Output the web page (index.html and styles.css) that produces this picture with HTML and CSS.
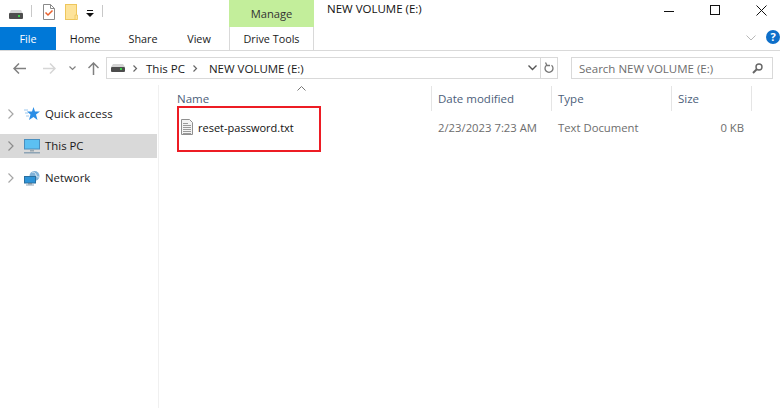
FILE: index.html
```html
<!DOCTYPE html>
<html lang="en">
<head>
<meta charset="utf-8">
<title>NEW VOLUME (E:)</title>
<link rel="stylesheet" href="styles.css">
</head>
<body>
<div class="window">
  <header class="titlebar">
    <svg class="qat-drive" width="14" height="9" viewBox="0 0 14 9"><path d="M2 0h10l2 4H0z" fill="#d4d4d4"/><rect x="0" y="3" width="14" height="6" rx="1" fill="#4d4d4d"/><rect x="9" y="5" width="2" height="2" fill="#3fd04a"/></svg>
    <span class="qat-sep sep-a"></span>
    <svg class="qat-props" width="12" height="16" viewBox="0 0 12 16"><path d="M.5.500h7l4 4v11H.5z" fill="#fff" stroke="#8a8a8a"/><path d="M7.500.5v4h4" fill="none" stroke="#8a8a8a"/><path d="M2.500 8.500l2.500 2.500 4.500-4.500" fill="none" stroke="#e8602c" stroke-width="1.500"/></svg>
    <svg class="qat-folder" width="13" height="16" viewBox="0 0 13 16"><rect x=".5" y=".5" width="11" height="15" fill="#fde39a" stroke="#eec65c"/><path d="M10 11v4.500h2.500V11z" fill="#fde39a" stroke="#eec65c" stroke-width=".8"/></svg>
    <svg class="qat-more" width="8" height="7" viewBox="0 0 8 7"><rect x="1" y="0" width="6" height="1" fill="#111"/><path d="M0 3h8L4 7z" fill="#111"/></svg>
    <span class="qat-sep sep-b"></span>
    <div class="manage">Manage</div>
    <div class="title">NEW VOLUME (E:)</div>
    <div class="controls">
      <svg width="11" height="11" viewBox="0 0 11 11"><path d="M0 6.500h10" stroke="#111"/></svg>
      <svg width="11" height="11" viewBox="0 0 11 11"><rect x=".5" y=".5" width="9" height="9" fill="none" stroke="#111"/></svg>
      <svg width="11" height="11" viewBox="0 0 11 11"><path d="M.5.500l10 10M10.500.500l-10 10" stroke="#111" fill="none"/></svg>
    </div>
  </header>

  <nav class="tabs">
    <div class="tab file">File</div>
    <div class="tab home">Home</div>
    <div class="tab share">Share</div>
    <div class="tab view">View</div>
    <div class="tab drive-tools">Drive Tools</div>
    <svg class="collapse" width="10" height="6" viewBox="0 0 10 6"><path d="M.5.500L5 5 9.500.500" fill="none" stroke="#b8b8b8"/></svg>
    <div class="help">?</div>
  </nav>

  <div class="navbar">
    <svg class="nav-back" width="13" height="11" viewBox="0 0 13 11"><path d="M6 .5L1 5.500l5 5M1 5.500h12" fill="none" stroke="#808080" stroke-width="1.500"/></svg>
    <svg class="nav-forward" width="13" height="11" viewBox="0 0 13 11"><path d="M7 .5l5 5-5 5M12 5.500H0" fill="none" stroke="#d6d6d6" stroke-width="1.500"/></svg>
    <svg class="nav-down" width="7" height="5" viewBox="0 0 7 5"><path d="M.5.500l3 3 3-3" fill="none" stroke="#808080" stroke-width="1.200"/></svg>
    <svg class="nav-up" width="11" height="13" viewBox="0 0 11 13"><path d="M.5 6l5-5 5 5M5.500 1v12" fill="none" stroke="#808080" stroke-width="1.500"/></svg>
    <div class="address">
      <svg class="addr-drive" width="14" height="8" viewBox="0 0 14 8"><path d="M2 0h10l2 3H0z" fill="#d4d4d4"/><rect x="0" y="3" width="14" height="5" rx="1" fill="#4d4d4d"/><rect x="9" y="4" width="2" height="2" fill="#3fd04a"/></svg>
      <svg class="crumb-sep" width="5" height="7" viewBox="0 0 5 7"><path d="M.5.500l3 3-3 3" fill="none" stroke="#666" stroke-width="1.200"/></svg>
      <span class="crumb crumb-pc">This PC</span>
      <svg class="crumb-sep" width="5" height="7" viewBox="0 0 5 7"><path d="M.5.500l3 3-3 3" fill="none" stroke="#666" stroke-width="1.200"/></svg>
      <span class="crumb">NEW VOLUME (E:)</span>
      <svg class="addr-drop" width="9" height="6" viewBox="0 0 9 6"><path d="M.5.500l4 4 4-4" fill="none" stroke="#555" stroke-width="1.400"/></svg>
      <div class="addr-refresh">
        <svg width="10" height="12" viewBox="0 0 10 12"><path d="M2.500 3.200a4 4 0 1 0 5 0M1.500.5l1.500 3H6" fill="none" stroke="#777" stroke-width="1.300"/></svg>
      </div>
    </div>
    <div class="search">
      <span class="search-text">Search NEW VOLUME (E:)</span>
      <svg width="11" height="11" viewBox="0 0 11 11"><circle cx="7" cy="4" r="3" fill="none" stroke="#666" stroke-width="1.400"/><path d="M5 6l-4 4" stroke="#666" stroke-width="2"/></svg>
    </div>
  </div>

  <main class="main">
    <aside class="sidebar">
      <div class="side-row">
        <svg class="chev" width="6" height="10" viewBox="0 0 6 10"><path d="M.5.500L5 5 .5 9.500" fill="none" stroke="#a6a6a6" stroke-width="1.200"/></svg>
        <svg class="side-icon" width="16" height="14" viewBox="0 0 16 14"><path d="M9.500 0l1.500 4.500h5L12 7.500l1.500 5.500-4-3L5 13l1.500-5.500L3 4.500h5z" fill="#2b8ee6"/><path d="M0 3h4M1 6h3M2 9h3" stroke="#9cc8ee"/></svg>
        <span class="side-label">Quick access</span>
      </div>
      <div class="side-row selected">
        <svg class="chev" width="6" height="10" viewBox="0 0 6 10"><path d="M.5.500L5 5 .5 9.500" fill="none" stroke="#8c8c8c" stroke-width="1.200"/></svg>
        <svg class="side-icon" width="16" height="15" viewBox="0 0 16 15"><rect x=".5" y=".5" width="15" height="9.500" fill="#5cc0f2" stroke="#4a8fbf"/><rect x="6" y="10.500" width="4" height="2" fill="#9aa7b0"/><rect x="0" y="13" width="16" height="1.500" fill="#8ea4b5"/></svg>
        <span class="side-label">This PC</span>
      </div>
      <div class="side-row">
        <svg class="chev" width="6" height="10" viewBox="0 0 6 10"><path d="M.5.500L5 5 .5 9.500" fill="none" stroke="#a6a6a6" stroke-width="1.200"/></svg>
        <svg class="side-icon" width="16" height="15" viewBox="0 0 16 15"><circle cx="10.500" cy="5" r="5" fill="#7fb2d9"/><path d="M8 1c2 0 4 1 4 3s2 2 3 2" fill="none" stroke="#dfeaf2"/><rect x=".5" y="5.500" width="11" height="6.500" fill="#2e94d8" stroke="#2a6f9f"/><rect x="4" y="12" width="4" height="1.500" fill="#7d8f9c"/><rect x="2" y="13.500" width="8" height="1" fill="#8ea4b5"/></svg>
        <span class="side-label">Network</span>
      </div>
    </aside>
    <section class="content">
      <svg class="sort" width="9" height="5" viewBox="0 0 9 5"><path d="M.5 4.500l4-4 4 4" fill="none" stroke="#777"/></svg>
      <div class="columns">
        <div class="col col-name col-name-head">Name</div>
        <div class="col col-date">Date modified</div>
        <div class="col col-type">Type</div>
        <div class="col col-size">Size</div>
      </div>
      <div class="file-row">
        <div class="col-name file-name">
          <svg width="12" height="16" viewBox="0 0 12 16"><path d="M.5.500h8l3 3v12H.5z" fill="#f4f4f4" stroke="#8f8f8f"/><path d="M2 4.500h5M2 6.500h8M2 8.500h8M2 10.500h8M2 12.500h8M2 14.500h8" stroke="#9a9a9a"/></svg>
          <span>reset-password.txt</span>
        </div>
        <div class="col-date cell">2/23/2023 7:23 AM</div>
        <div class="col-type cell">Text Document</div>
        <div class="col-size cell size-cell">0 KB</div>
      </div>
      <div class="highlight"></div>
    </section>
  </main>
</div>
</body>
</html>
```

FILE: styles.css
```css
* { box-sizing: border-box; }
html, body { margin: 0; padding: 0; background: #fff; }
body { font-family: "Open Sans", "Noto Sans", sans-serif; font-size: 11.500px; color: #1a1a1a; }
svg { display: block; flex: none; }

.window { width: 780px; height: 408px; display: flex; flex-direction: column; overflow: hidden; }

.titlebar { height: 27px; display: flex; align-items: center; flex: none; }
.qat-drive { margin-left: 9px; margin-top: 1px; }
.qat-sep { width: 1px; height: 12px; background: #c8c8c8; }
.sep-a { margin-left: 8px; margin-top: -6px; }
.qat-props { margin-left: 11px; margin-top: -3px; }
.qat-folder { margin-left: 10px; margin-top: -3px; }
.qat-more { margin-left: 8px; margin-top: -1px; }
.sep-b { margin-left: 8px; margin-top: -6px; }
.manage { margin-left: 126px; width: 85px; height: 27px; background: #c3ee9b; color: #333; font-size: 11.200px; text-align: center; line-height: 28px; }
.title { margin-left: 13px; color: #111; align-self: flex-start; line-height: 18px; }
.controls { margin-left: auto; display: flex; gap: 35px; padding-right: 13px; margin-top: -7px; }

.tabs { height: 24px; flex: none; display: flex; align-items: stretch; border-bottom: 1px solid #d9d9d9; font-size: 10.800px; }
.tab { line-height: 23px; text-align: center; }
.file { width: 56px; background: #0078d7; color: #fff; }
.home { width: 58px; }
.share { width: 58px; }
.view { width: 54px; }
.drive-tools { margin-left: 3px; width: 85px; border-left: 1px solid #d9d9d9; border-right: 1px solid #d9d9d9; background: #fff; }
.collapse { margin-left: auto; align-self: center; margin-top: -2px; }
.help { margin: 3px 0 0 10px; width: 14px; height: 14px; border-radius: 50%; background: #0e6fc9; color: #fff; font-weight: 700; font-size: 11px; line-height: 14px; text-align: center; }

.navbar { height: 34px; flex: none; display: flex; align-items: center; }
.nav-back { margin-left: 13px; }
.nav-forward { margin-left: 17px; }
.nav-down { margin-left: 13px; }
.nav-up { margin-left: 12px; }
.address { margin-left: 7px; width: 452px; height: 22px; border: 1px solid #d9d9d9; display: flex; align-items: center; }
.addr-drive { margin-left: 4px; }
.crumb-sep { margin-left: 8px; }
.crumb { margin-left: 11px; color: #1a1a1a; }
.crumb-pc { margin-left: 8px; }
.addr-drop { margin-left: auto; }
.addr-refresh { margin-left: 3px; width: 17px; height: 20px; border-left: 1px solid #d9d9d9; display: flex; align-items: center; justify-content: center; }
.search { margin-left: 13px; width: 202px; height: 22px; border: 1px solid #d9d9d9; display: flex; align-items: center; justify-content: space-between; padding: 0 9px 0 7px; color: #6d6d6d; }

.main { flex: 1; display: flex; min-height: 0; }
.sidebar { width: 159px; border-right: 1px solid #f0f0f0; padding-top: 17px; display: flex; flex-direction: column; gap: 8px; flex: none; font-size: 11.400px; }
.side-row { height: 24px; display: flex; align-items: center; padding-left: 8px; }
.side-label { margin-bottom: 2px; }
.selected { background: #d9d9d9; width: 157px; }
.side-icon { margin-left: 10px; margin-right: 5px; }

.content { flex: 1; position: relative; padding-left: 11px; }
.sort { position: absolute; left: 138px; top: 1px; }
.columns { display: flex; height: 25px; margin-top: 1px; }
.col { line-height: 25px; color: #4c607a; padding-left: 6px; border-right: 1px solid #e5e5e5; }
.col-name { width: 262px; }
.col-name-head { padding-left: 7px; }
.col-date { width: 120px; }
.col-type { width: 120px; }
.col-size { width: 80px; }
.file-row { display: flex; height: 22px; margin-top: 5px; align-items: center; font-size: 11.300px; }
.file-name { display: flex; align-items: center; gap: 5px; padding-left: 11px; color: #111; font-size: 11px; }
.cell { padding-left: 6px; color: #6d6d6d; }
.size-cell { text-align: right; padding-right: 8px; }
.highlight { position: absolute; left: 18px; top: 21px; width: 144px; height: 46px; border: 2px solid #ed1c24; }
```
